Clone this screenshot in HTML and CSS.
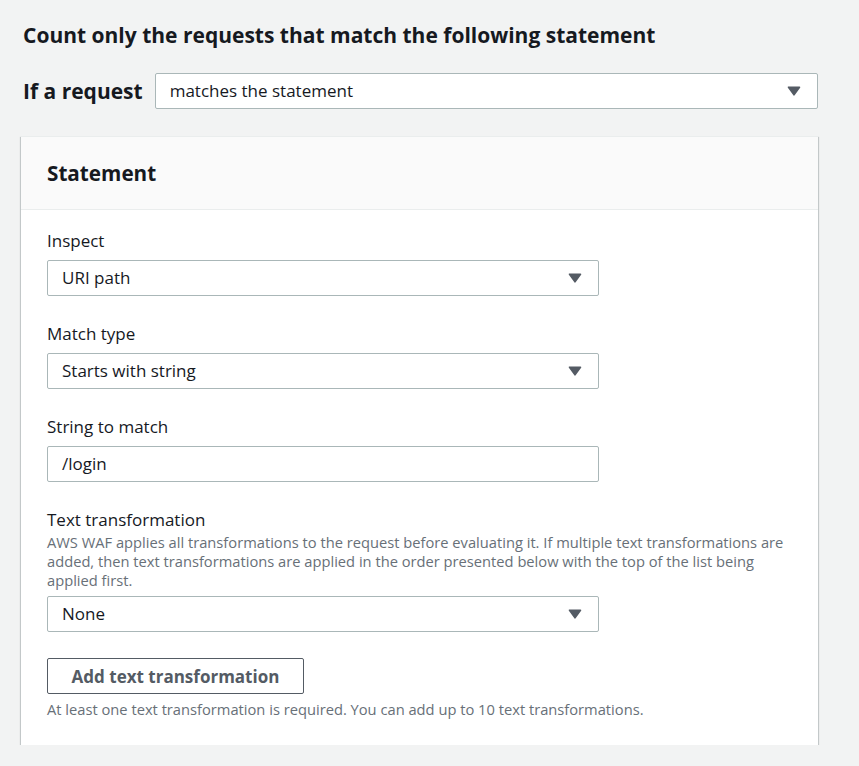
FILE: index.html
```html
<!DOCTYPE html>
<html lang="en">
<head>
<meta charset="utf-8">
<title>Statement</title>
<link rel="stylesheet" href="styles.css">
</head>
<body>
<div class="page">
  <h2 class="title">Count only the requests that match the following statement</h2>
  <div class="if-row">
    <span class="if-label">If a request</span>
    <div class="select select-wide">
      <span class="select-value">matches the statement</span>
      <svg class="caret" width="14" height="10" viewBox="0 0 14 10"><path d="M1.5 1.2 H12.5 L7 8.8 Z" fill="#545b64" stroke="#545b64" stroke-width="1.6" stroke-linejoin="round"/></svg>
    </div>
  </div>
  <section class="card">
    <header class="card-header">
      <h3 class="card-title">Statement</h3>
    </header>
    <div class="card-body">
      <div class="field">
        <label class="field-label">Inspect</label>
        <div class="select">
          <span class="select-value">URI path</span>
          <svg class="caret" width="14" height="10" viewBox="0 0 14 10"><path d="M1.5 1.2 H12.5 L7 8.8 Z" fill="#545b64" stroke="#545b64" stroke-width="1.6" stroke-linejoin="round"/></svg>
        </div>
      </div>
      <div class="field">
        <label class="field-label">Match type</label>
        <div class="select">
          <span class="select-value">Starts with string</span>
          <svg class="caret" width="14" height="10" viewBox="0 0 14 10"><path d="M1.5 1.2 H12.5 L7 8.8 Z" fill="#545b64" stroke="#545b64" stroke-width="1.6" stroke-linejoin="round"/></svg>
        </div>
      </div>
      <div class="field">
        <label class="field-label">String to match</label>
        <div class="select">
          <span class="select-value">/login</span>
        </div>
      </div>
      <div class="field">
        <label class="field-label tight">Text transformation</label>
        <p class="field-desc">AWS WAF applies all transformations to the request before evaluating it. If multiple text transformations are added, then text transformations are applied in the order presented below with the top of the list being applied first.</p>
        <div class="select">
          <span class="select-value">None</span>
          <svg class="caret" width="14" height="10" viewBox="0 0 14 10"><path d="M1.5 1.2 H12.5 L7 8.8 Z" fill="#545b64" stroke="#545b64" stroke-width="1.6" stroke-linejoin="round"/></svg>
        </div>
      </div>
      <div class="actions">
        <button class="btn">Add text transformation</button>
        <p class="hint">At least one text transformation is required. You can add up to 10 text transformations.</p>
      </div>
    </div>
  </section>
</div>
</body>
</html>
```
FILE: styles.css
```css
html, body {
  margin: 0;
  padding: 0;
  background: #f2f3f3;
}
body {
  font-family: "Open Sans", "Noto Sans", sans-serif;
  color: #16191f;
}
.page {
  width: 797px;
  margin-left: 21px;
  padding-top: 23px;
}
.title {
  margin: 0 0 0 2px;
  font-size: 21px;
  line-height: 24px;
  font-weight: 700;
}
.if-row {
  display: flex;
  align-items: center;
  gap: 12px;
  margin-top: 26px;
}
.if-label {
  margin-left: 2px;
  font-size: 21px;
  font-weight: 700;
  line-height: 28px;
  white-space: nowrap;
}
.select {
  box-sizing: border-box;
  height: 36px;
  width: 552px;
  background: #fff;
  border: 1px solid #aab7b8;
  border-radius: 2px;
  display: flex;
  align-items: center;
  justify-content: space-between;
  padding: 0 16px 0 14px;
  font-size: 17px;
}
.select-wide {
  flex: 1;
  width: auto;
}
.select-value {
  line-height: 22px;
}
.caret {
  display: block;
}
.card {
  margin-top: 27px;
  background: #fff;
  border-top: 1px solid #eaeded;
  box-shadow: 0 1px 1px 0 rgba(0, 28, 36, 0.3), 1px 1px 1px 0 rgba(0, 28, 36, 0.15), -1px 1px 1px 0 rgba(0, 28, 36, 0.15);
}
.card-header {
  background: #fafafa;
  border-bottom: 1px solid #eaeded;
  height: 73px;
  box-sizing: border-box;
  display: flex;
  align-items: center;
  padding: 0 26px;
}
.card-title {
  margin: 0;
  font-size: 20.7px;
  line-height: 26px;
  font-weight: 700;
}
.card-body {
  padding: 20px 26px 26px;
  display: flex;
  flex-direction: column;
  gap: 27px;
}
.field {
  display: flex;
  flex-direction: column;
}
.field-label {
  font-size: 17px;
  line-height: 22px;
  margin-bottom: 8px;
}
.field-label.tight {
  margin-bottom: 1.5px;
}
.field-desc {
  margin: 0 0 6.5px;
  font-size: 14.7px;
  line-height: 19px;
  color: #687078;
}
.actions {
  display: flex;
  flex-direction: column;
  align-items: flex-start;
  gap: 6px;
  margin-top: -1px;
}
.btn {
  box-sizing: border-box;
  height: 36px;
  width: 257px;
  background: #fff;
  border: 1px solid #545b64;
  border-radius: 2px;
  font-family: inherit;
  font-size: 17px;
  font-weight: 700;
  color: #545b64;
  padding: 0;
}
.hint {
  margin: 0;
  font-size: 14.7px;
  line-height: 19px;
  color: #687078;
}
```
